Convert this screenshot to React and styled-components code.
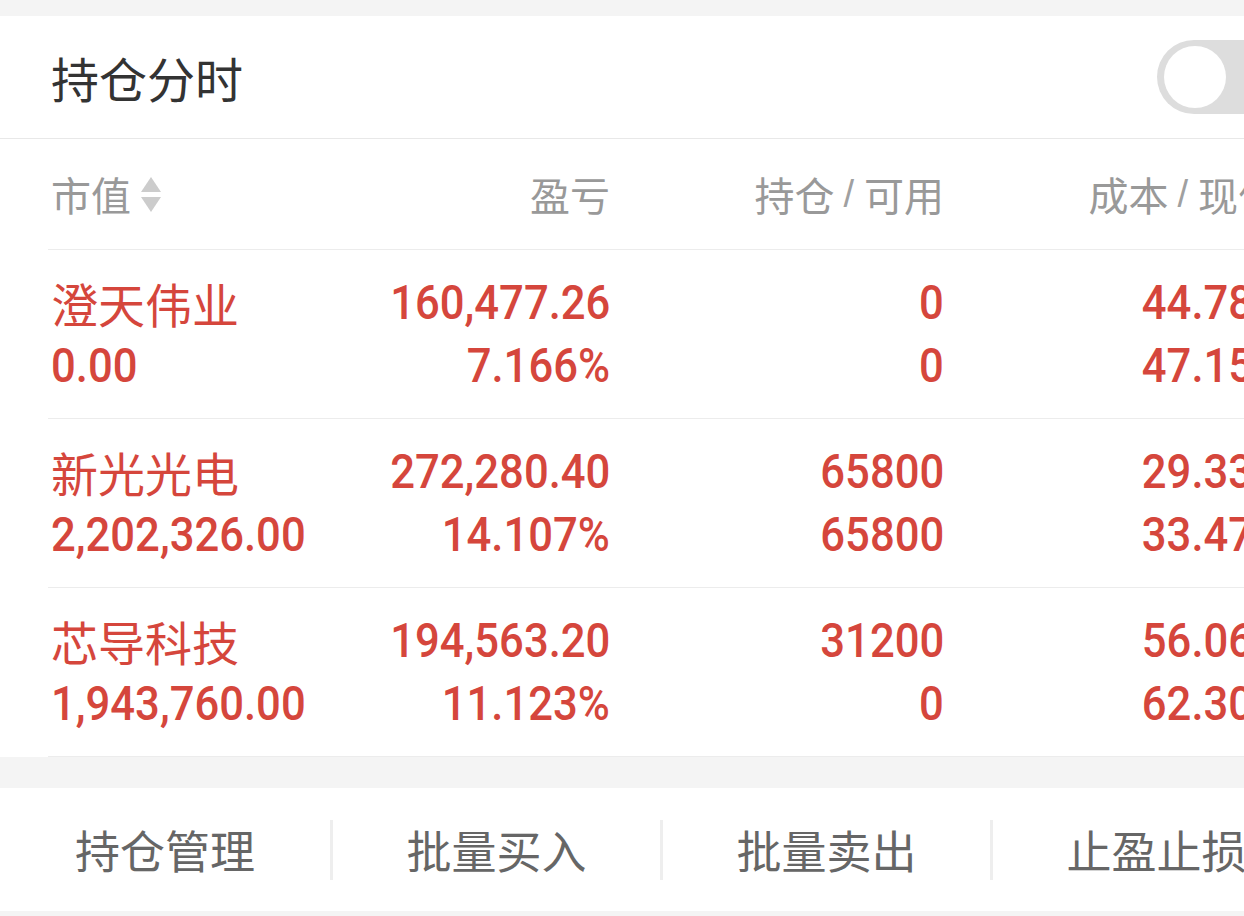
import React from "react";
import styled, { createGlobalStyle } from "styled-components";

const Global = createGlobalStyle`
  html, body { margin: 0; padding: 0; background: #f4f4f4; overflow: hidden; }
  body { font-family: "Noto Sans CJK SC", "Noto Sans", sans-serif; }
  #root { width: 1244px; overflow: hidden; }
`;

const RED = "#d5463c";
const NUM_FONT = `"Roboto", "Noto Sans", sans-serif`;

const Page = styled.div`
  width: 1330px;
  padding-top: 16px;
`;

const Card = styled.section`
  background: #fff;
`;

const Header = styled.header`
  height: 123px;
  display: flex;
  align-items: center;
  justify-content: space-between;
  padding: 0 45px 0 51px;
  border-bottom: 1px solid #e8e8e8;
  box-sizing: border-box;
`;

const Title = styled.h1`
  margin: 0;
  font-size: 48px;
  font-weight: 400;
  color: #333;
`;

const Toggle = styled.div`
  width: 130px;
  height: 74px;
  border-radius: 37px;
  background: #dddddd;
  display: flex;
  align-items: center;
  padding-left: 7px;
  box-sizing: border-box;
  margin-left: auto;
  margin-right: -2px;
`;

const Knob = styled.div`
  width: 62px;
  height: 62px;
  border-radius: 50%;
  background: #fff;
`;

const Grid = styled.div`
  margin-left: 48px;
  display: grid;
  grid-template-columns: 262px 300px 334px 334px;
  border-bottom: 1px solid #ececec;
  box-sizing: border-box;
`;

const HeadRow = styled(Grid)`
  height: 111px;
  align-items: center;
`;

const HeadCell = styled.div`
  display: flex;
  align-items: center;
  justify-content: ${(p) => (p.$left ? "flex-start" : "flex-end")};
  font-size: 40px;
  color: #999;
  white-space: nowrap;
  padding-left: ${(p) => (p.$left ? "3px" : "0")};
`;

const Slash = styled.span`
  font-family: "Liberation Sans", sans-serif;
  font-weight: 300;
  font-size: 38px;
  margin: 0 10px 0 9px;
  color: #a0a0a0;
`;

const DataRow = styled(Grid)`
  height: 169px;
  padding: 21px 0 21px;
`;

const Cell = styled.div`
  display: flex;
  flex-direction: column;
  align-items: ${(p) => (p.$left ? "flex-start" : "flex-end")};
  padding-left: ${(p) => (p.$left ? "3px" : "0")};
  white-space: nowrap;
`;

const Name = styled.div`
  height: 63px;
  line-height: 63px;
  font-size: 47px;
  color: ${RED};
`;

const Num = styled.div`
  height: 63px;
  line-height: 63px;
  font-family: ${NUM_FONT};
  font-weight: 500;
  font-size: 49px;
  color: ${RED};
  transform: scaleX(0.89);
  transform-origin: ${(p) => (p.$left ? "left" : "right")} center;
`;

const Gap = styled.div`
  height: 31px;
  background: #f4f4f4;
`;

const Actions = styled.nav`
  height: 123px;
  background: #fff;
  display: flex;
  align-items: center;
`;

const Action = styled.div`
  width: 330px;
  height: 60px;
  display: flex;
  align-items: center;
  justify-content: center;
  font-size: 45px;
  color: #666;
  box-sizing: border-box;
  & + & {
    border-left: 3px solid #eeeeee;
  }
`;

const SortIcon = () => (
  <svg width="24" height="42" viewBox="0 0 24 42" style={{ marginLeft: 8 }}>
    <path d="M12 4 L22 19 L2 19 Z" fill="#cccccc" />
    <path d="M2 24 L22 24 L12 39 Z" fill="#cccccc" />
  </svg>
);

const rows = [
  { name: "澄天伟业", mv: "0.00", pl: "160,477.26", pct: "7.166%", hold: "0", avail: "0", cost: "44.785", price: "47.155" },
  { name: "新光光电", mv: "2,202,326.00", pl: "272,280.40", pct: "14.107%", hold: "65800", avail: "65800", cost: "29.335", price: "33.470" },
  { name: "芯导科技", mv: "1,943,760.00", pl: "194,563.20", pct: "11.123%", hold: "31200", avail: "0", cost: "56.065", price: "62.300" },
];

export default function App() {
  return (
    <>
      <Global />
      <Page>
        <Card>
          <Header>
            <Title>持仓分时</Title>
            <Toggle>
              <Knob />
            </Toggle>
          </Header>
          <HeadRow>
            <HeadCell $left>
              市值
              <SortIcon />
            </HeadCell>
            <HeadCell>盈亏</HeadCell>
            <HeadCell>
              持仓<Slash>/</Slash>可用
            </HeadCell>
            <HeadCell>
              成本<Slash>/</Slash>现价
            </HeadCell>
          </HeadRow>
          {rows.map((r) => (
            <DataRow key={r.name}>
              <Cell $left>
                <Name>{r.name}</Name>
                <Num $left>{r.mv}</Num>
              </Cell>
              <Cell>
                <Num>{r.pl}</Num>
                <Num>{r.pct}</Num>
              </Cell>
              <Cell>
                <Num>{r.hold}</Num>
                <Num>{r.avail}</Num>
              </Cell>
              <Cell>
                <Num>{r.cost}</Num>
                <Num>{r.price}</Num>
              </Cell>
            </DataRow>
          ))}
        </Card>
        <Gap />
        <Actions>
          <Action>持仓管理</Action>
          <Action>批量买入</Action>
          <Action>批量卖出</Action>
          <Action>止盈止损</Action>
        </Actions>
      </Page>
    </>
  );
}
